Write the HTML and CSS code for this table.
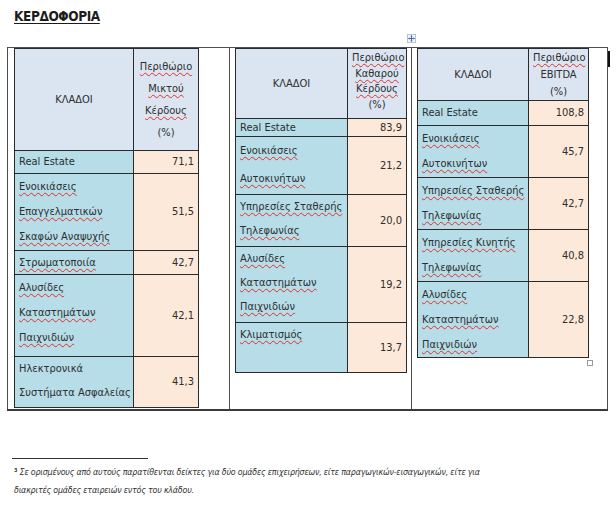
FILE: index.html
```html
<!DOCTYPE html>
<html lang="el">
<head>
<meta charset="utf-8">
<title>ΚΕΡΔΟΦΟΡΙΑ</title>
<link rel="stylesheet" href="styles.css">
</head>
<body>
<div class="page">
  <h1 class="title">ΚΕΡΔΟΦΟΡΙΑ</h1>

  <div class="outer-wrap">
    <table class="outer">
      <tr>
        <td class="oc oc1">
          <table class="kt t1">
            <colgroup><col class="c-lab"><col class="c-num"></colgroup>
            <tr class="r-h">
              <th class="hl">ΚΛΑΔΟΙ</th>
              <th class="hn"><span class="sq">Περιθώριο</span><br><span class="sq">Μικτού</span><br><span class="sq">Κέρδους</span><br>(%)</th>
            </tr>
            <tr class="r-a one">
              <td class="lab">Real Estate</td><td class="num">71,1</td>
            </tr>
            <tr class="r-b">
              <td class="lab"><span class="sq">Ενοικιάσεις</span><br><span class="sq">Επαγγελματικών</span><br><span class="sq">Σκαφών Αναψυχής</span></td><td class="num">51,5</td>
            </tr>
            <tr class="r-c one">
              <td class="lab"><span class="sq">Στρωματοποιία</span></td><td class="num">42,7</td>
            </tr>
            <tr class="r-d">
              <td class="lab"><span class="sq">Αλυσίδες</span><br><span class="sq">Καταστημάτων</span><br><span class="sq">Παιχνιδιών</span></td><td class="num">42,1</td>
            </tr>
            <tr class="r-e">
              <td class="lab">Ηλεκτρονικά<br>Συστήματα Ασφαλείας</td><td class="num">41,3</td>
            </tr>
          </table>
        </td>
        <td class="oc oc2">
          <table class="kt t2">
            <colgroup><col class="c-lab"><col class="c-num"></colgroup>
            <tr class="r-h">
              <th class="hl">ΚΛΑΔΟΙ</th>
              <th class="hn"><span class="sq">Περιθώριο</span><br><span class="sq">Καθαρού</span><br><span class="sq">Κέρδους</span><br>(%)</th>
            </tr>
            <tr class="r-a one">
              <td class="lab">Real Estate</td><td class="num">83,9</td>
            </tr>
            <tr class="r-b">
              <td class="lab"><span class="sq">Ενοικιάσεις</span><br><span class="sq">Αυτοκινήτων</span></td><td class="num">21,2</td>
            </tr>
            <tr class="r-c">
              <td class="lab"><span class="sq">Υπηρεσίες Σταθερής</span><br><span class="sq">Τηλεφωνίας</span></td><td class="num">20,0</td>
            </tr>
            <tr class="r-d">
              <td class="lab"><span class="sq">Αλυσίδες</span><br><span class="sq">Καταστημάτων</span><br><span class="sq">Παιχνιδιών</span></td><td class="num">19,2</td>
            </tr>
            <tr class="r-e">
              <td class="lab"><span class="sq">Κλιματισμός</span></td><td class="num">13,7</td>
            </tr>
          </table>
        </td>
        <td class="oc oc3">
          <table class="kt t3">
            <colgroup><col class="c-lab"><col class="c-num"></colgroup>
            <tr class="r-h">
              <th class="hl">ΚΛΑΔΟΙ</th>
              <th class="hn"><span class="sq">Περιθώριο</span><br>EBITDA<br>(%)</th>
            </tr>
            <tr class="r-a one">
              <td class="lab">Real Estate</td><td class="num">108,8</td>
            </tr>
            <tr class="r-b">
              <td class="lab"><span class="sq">Ενοικιάσεις</span><br><span class="sq">Αυτοκινήτων</span></td><td class="num">45,7</td>
            </tr>
            <tr class="r-c">
              <td class="lab"><span class="sq">Υπηρεσίες Σταθερής</span><br><span class="sq">Τηλεφωνίας</span></td><td class="num">42,7</td>
            </tr>
            <tr class="r-d">
              <td class="lab"><span class="sq">Υπηρεσίες Κινητής</span><br><span class="sq">Τηλεφωνίας</span></td><td class="num">40,8</td>
            </tr>
            <tr class="r-e">
              <td class="lab"><span class="sq">Αλυσίδες</span><br><span class="sq">Καταστημάτων</span><br><span class="sq">Παιχνιδιών</span></td><td class="num">22,8</td>
            </tr>
          </table>
        </td>
      </tr>
    </table>

    <span class="move-handle" aria-hidden="true">
      <svg width="9" height="9" viewBox="0 0 9 9">
        <rect x="0.5" y="0.5" width="8" height="8" fill="#f4f6fa" stroke="#b9c2cf"/>
        <path d="M4.5 1.5v6M1.5 4.5h6" stroke="#3f6fb0" stroke-width="1"/>
        <path d="M4.5 1.2l-1.2 1.3h2.4zM4.5 7.8l-1.2-1.3h2.4zM1.2 4.5l1.3-1.2v2.4zM7.8 4.5l-1.3-1.2v2.4z" fill="#3f6fb0"/>
      </svg>
    </span>
    <span class="resize-handle" aria-hidden="true"></span>
    <span class="caret" aria-hidden="true"></span>
  </div>

  <div class="footnote">
    <div class="fn-rule"></div>
    <p class="fn-text"><span class="fn-mark">³</span> Σε ορισμένους από αυτούς παρατίθενται δείκτες για δύο ομάδες επιχειρήσεων, είτε παραγωγικών-εισαγωγικών, είτε για<br>διακριτές ομάδες εταιρειών εντός του κλάδου.</p>
  </div>
</div>
</body>
</html>
```

FILE: styles.css
```css
* { box-sizing: border-box; }

html, body {
  margin: 0;
  background: #ffffff;
}

body {
  font-family: "DejaVu Sans Condensed", "DejaVu Sans", sans-serif;
  color: #2e2e2e;
}

.page {
  width: 616px;
  height: 505px;
  padding-top: 8px;
  overflow: hidden;
}

.title {
  margin: 0 0 23px 14px;
  font-size: 13.5px;
  line-height: 16px;
  font-weight: bold;
  letter-spacing: -0.4px;
  color: #1c1c1c;
  text-decoration: underline;
  text-underline-offset: 2px;
}

/* outer layout table */
.outer-wrap {
  position: relative;
  margin-left: 7px;
  width: 601px;
}

.outer {
  border-collapse: collapse;
  width: 601px;
  table-layout: fixed;
}

.oc {
  border: 1px solid #4d4d4d;
  border-bottom: 2px solid #3a3a3a;
  vertical-align: top;
  padding: 0;
  height: 362px;
}
.oc1 { width: 222px; padding-left: 6px; }
.oc2 { width: 182px; padding-left: 5px; }
.oc3 { width: 196px; padding-left: 5px; }

/* data tables */
.kt {
  border-collapse: collapse;
  table-layout: fixed;
  font-size: 11px;
  color: #2e2e2e;
}
.kt th,
.kt td {
  border: 1px solid #2a2a2a;
  padding: 0 4px;
  white-space: nowrap;
}

.kt th {
  font-weight: normal;
  background: #dbe5f1;
  text-align: center;
  vertical-align: middle;
}

.lab {
  background: #b6dde8;
  vertical-align: top;
  line-height: 25px;
}
.one .lab { vertical-align: middle; line-height: 16px; }

.num {
  background: #fde9d9;
  text-align: right;
  vertical-align: middle;
  line-height: 16px;
}

.sq {
  text-decoration: underline wavy #e0302a;
  text-decoration-thickness: 1px;
  text-underline-offset: 2px;
  text-decoration-skip-ink: none;
}

/* table 1 */
.t1 { width: 184px; }
.t1 .c-lab { width: 119px; }
.t1 .c-num { width: 65px; }
.t1 .hn { line-height: 22px; }
.t1 .r-h { height: 102px; }
.t1 .r-a { height: 23px; }
.t1 .r-b { height: 77px; }
.t1 .r-c { height: 24px; }
.t1 .r-d { height: 82px; }
.t1 .r-e { height: 51px; }
.t1 .r-e .lab { line-height: 24px; }

/* table 2 */
.t2 { width: 171px; }
.t2 .c-lab { width: 112px; }
.t2 .c-num { width: 59px; }
.t2 .hn { line-height: 15.5px; vertical-align: top; padding-top: 1px; }
.t2 .r-h { height: 70px; }
.t2 .r-a { height: 18px; }
.t2 .r-b { height: 58px; }
.t2 .r-c { height: 52px; }
.t2 .r-d { height: 76px; }
.t2 .r-e { height: 50px; }
.t2 .r-b .lab { line-height: 28px; }
.t2 .r-c .lab,
.t2 .r-d .lab,
.t2 .r-e .lab { line-height: 24px; }

/* table 3 */
.t3 { width: 171px; }
.t3 .c-lab { width: 111px; }
.t3 .c-num { width: 60px; }
.t3 .hn { line-height: 17px; }
.t3 .r-h { height: 52px; }
.t3 .r-a { height: 25px; }
.t3 .r-b { height: 52px; }
.t3 .r-c { height: 52px; }
.t3 .r-d { height: 52px; }
.t3 .r-e { height: 76px; }
.t3 .r-b .lab,
.t3 .r-c .lab,
.t3 .r-d .lab { line-height: 25px; }

/* editor overlays */
.move-handle {
  position: absolute;
  left: 400px;
  top: -13px;
  width: 9px;
  height: 9px;
  line-height: 0;
}
.resize-handle {
  position: absolute;
  left: 580px;
  top: 313px;
  width: 6px;
  height: 6px;
  border: 1px solid #9a9a9a;
  background: #ffffff;
}
.caret {
  position: absolute;
  left: 601px;
  top: 4px;
  width: 2px;
  height: 16px;
  background: #111111;
}

/* footnote */
.footnote {
  margin-top: 47px;
  padding-left: 12px;
}
.fn-rule {
  width: 136px;
  height: 1px;
  background: #333333;
}
.fn-text {
  margin: 4px 0 0 2px;
  font-size: 8.8px;
  line-height: 18px;
  font-style: italic;
  letter-spacing: -0.2px;
  color: #333333;
  white-space: nowrap;
}
.fn-mark {
  font-style: normal;
  font-weight: bold;
}
```
